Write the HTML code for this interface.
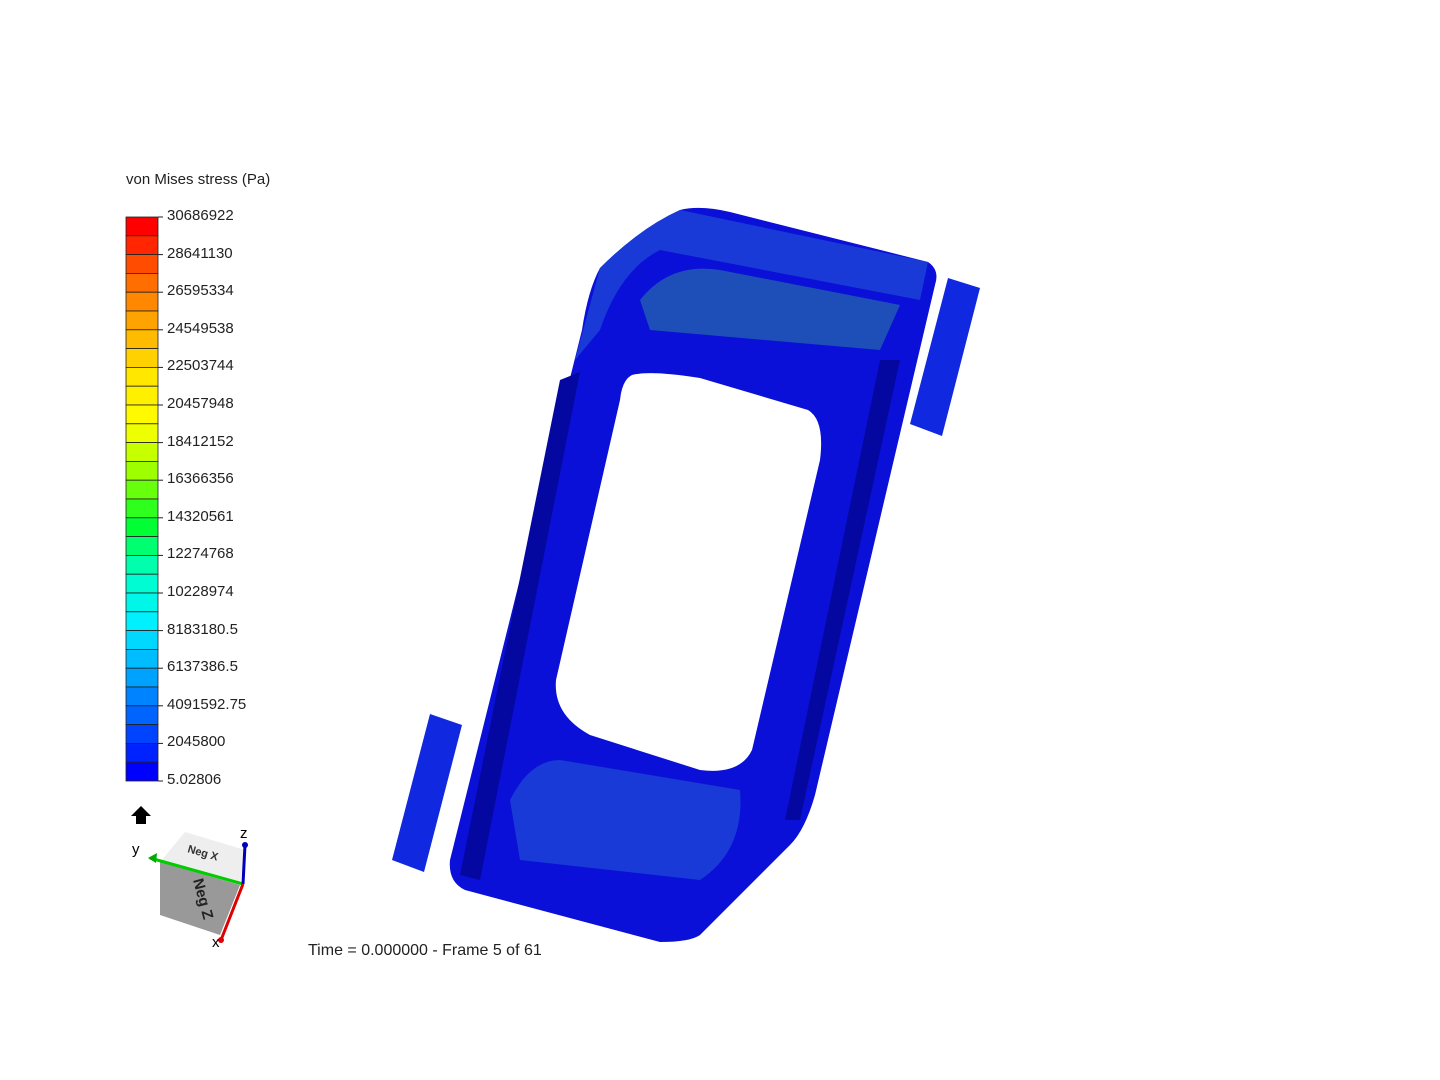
<!DOCTYPE html><html><head><style>
body{margin:0;width:1440px;height:1080px;background:#fff;font-family:"Liberation Sans",sans-serif;position:relative;overflow:hidden}
.t{position:absolute;font-size:15px;color:#222}
</style></head><body>
<div class="t" style="left:126px;top:171px">von Mises stress (Pa)</div>
<svg width="1440" height="1080" style="position:absolute;left:0;top:0">
<g id="bar"></g>
<path d="M980,288 L948,278 L910,424 L942,436 Z" fill="#1028e0"/>
<path d="M462,725 L430,714 L392,860 L424,872 Z" fill="#1028e0"/>
<path d="M600,268 Q640,228 680,210 Q700,205 730,212 L928,262 Q940,270 935,285 L815,795 Q805,830 790,845 L700,935 Q690,942 660,942 L465,890 Q448,882 450,860 L582,330 Q588,290 600,268 Z" fill="#0a10d8"/>
<path d="M600,268 Q640,228 680,210 L928,262 L920,300 L660,250 Q620,270 600,330 L575,360 Z" fill="#1a3ad8"/>
<path d="M640,300 Q670,262 720,270 L900,305 L880,350 L650,330 Z" fill="#1e4fb8"/>
<path d="M510,800 Q530,760 560,760 L740,790 Q745,850 700,880 L520,860 Z" fill="#1a3ad8"/>
<path d="M632,375 Q650,370 700,378 L808,410 Q825,420 820,460 L752,750 Q740,775 700,770 L590,735 Q553,715 556,680 L620,400 Q622,380 632,375 Z" fill="#fff"/>
<path d="M560,380 L580,372 L480,880 L460,875 Z" fill="#0508a0"/>
<path d="M880,360 L900,360 L800,820 L785,820 Z" fill="#0508a0"/>
<polygon points="185,832 245,850 240,885 160,862" fill="#eee"/>
<polygon points="160,862 240,885 220,935 160,915" fill="#999"/>
<line x1="243" y1="884" x2="150" y2="858" stroke="#0c0" stroke-width="3"/>
<line x1="243" y1="884" x2="245" y2="845" stroke="#00b" stroke-width="3"/>
<line x1="243" y1="884" x2="221" y2="940" stroke="#d00" stroke-width="3"/>
<circle cx="245" cy="845" r="3" fill="#00b"/><circle cx="221" cy="940" r="3" fill="#d00"/>
<polygon points="148,858 157,853 156,863" fill="#0a0"/>
<polygon points="141,806 131,816 136,816 136,824 146,824 146,816 151,816" fill="#000"/>
<text x="132" y="854" font-size="15" font-family="Liberation Sans">y</text>
<text x="240" y="838" font-size="15" font-family="Liberation Sans">z</text>
<text x="212" y="947" font-size="15" font-family="Liberation Sans">x</text>
<text x="187" y="852" font-size="11" font-weight="bold" fill="#333" transform="rotate(16 187 852)" font-family="Liberation Sans">Neg X</text>
<text x="193" y="880" font-size="15" font-weight="bold" fill="#222" transform="rotate(75 193 880)" font-family="Liberation Sans">Neg Z</text>
</svg>
<div class="t" style="left:308px;top:942px;font-size:16px">Time = 0.000000 - Frame 5 of 61</div>
<div id="labels"></div>
<script>
var stops=[[255,0,0],[255,100,0],[255,170,0],[255,230,0],[255,255,0],[150,255,0],[0,255,40],[0,255,200],[0,240,255],[0,170,255],[0,90,255],[0,0,255]];
var g=document.getElementById('bar'),s='';
for(var i=0;i<30;i++){var f=i/29*(stops.length-1),a=Math.floor(f),b=Math.min(a+1,stops.length-1),t=f-a;
var c=stops[a].map(function(v,k){return Math.round(v+(stops[b][k]-v)*t)});
s+='<rect x="126" y="'+(217+i*18.8)+'" width="32" height="18.8" fill="rgb('+c+')" stroke="#222" stroke-width="0.8"/>';}
for(var j=0;j<16;j++){var y=217+j*37.6;s+='<line x1="158" y1="'+y+'" x2="163" y2="'+y+'" stroke="#222"/>';}
g.innerHTML=s;
var L=["30686922","28641130","26595334","24549538","22503744","20457948","18412152","16366356","14320561","12274768","10228974","8183180.5","6137386.5","4091592.75","2045800","5.02806"],h='';
for(j=0;j<16;j++)h+='<div class="t" style="left:167px;top:'+(207+j*37.6)+'px">'+L[j]+'</div>';
document.getElementById('labels').innerHTML=h;
</script>
</body></html>
